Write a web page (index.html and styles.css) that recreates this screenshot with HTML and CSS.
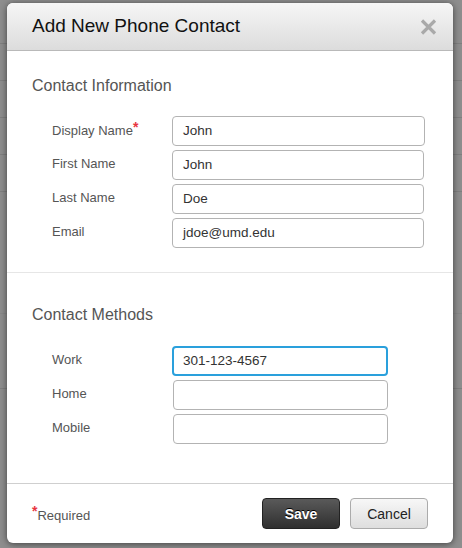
FILE: index.html
```html
<!DOCTYPE html>
<html>
<head>
<meta charset="utf-8">
<link rel="stylesheet" href="styles.css">
</head>
<body>
<div class="modal">
  <div class="modal-header">
    <h1 class="modal-title">Add New Phone Contact</h1>
    <span class="close" aria-label="Close">
      <svg width="17" height="16" viewBox="0 0 17 16"><path d="M2 1.5 L15 14.5 M15 1.5 L2 14.5" stroke="#a9a9a9" stroke-width="3.2" stroke-linecap="butt"/></svg>
    </span>
  </div>
  <div class="section section-info">
    <h2 class="section-title">Contact Information</h2>
    <div class="rows">
      <div class="row"><label class="label">Display Name<span class="req">*</span></label><div class="input wide">John</div></div>
      <div class="row"><label class="label">First Name</label><div class="input">John</div></div>
      <div class="row"><label class="label">Last Name</label><div class="input">Doe</div></div>
      <div class="row"><label class="label">Email</label><div class="input">jdoe@umd.edu</div></div>
    </div>
  </div>
  <div class="section section-methods">
    <h2 class="section-title">Contact Methods</h2>
    <div class="rows">
      <div class="row"><label class="label">Work</label><div class="input short focus">301-123-4567</div></div>
      <div class="row"><label class="label">Home</label><div class="input short"></div></div>
      <div class="row"><label class="label">Mobile</label><div class="input short"></div></div>
    </div>
  </div>
  <div class="modal-footer">
    <span class="required"><span class="req">*</span>Required</span>
    <div class="buttons">
      <button class="btn btn-save">Save</button>
      <button class="btn btn-cancel">Cancel</button>
    </div>
  </div>
</div>
</body>
</html>
```
FILE: styles.css
```css
html, body {
  margin: 0;
  padding: 0;
}
body {
  width: 462px;
  height: 548px;
  overflow: hidden;
  background-color: #8e8e8e;
  background-image:
    linear-gradient(#7f7f7f, #7f7f7f),
    linear-gradient(#7f7f7f, #7f7f7f),
    linear-gradient(#7f7f7f, #7f7f7f),
    linear-gradient(#7f7f7f, #7f7f7f),
    linear-gradient(#7f7f7f, #7f7f7f),
    linear-gradient(#888888, #888888),
    linear-gradient(#7f7f7f, #7f7f7f);
  background-repeat: no-repeat;
  background-size: 100% 1px;
  background-position: 0 43px, 0 80px, 0 117px, 0 154px, 0 191px, 0 313px, 0 388px;
  font-family: "Liberation Sans", Arial, sans-serif;
  padding: 3px 9px 0 7px;
  box-sizing: border-box;
}
.modal {
  width: 446px;
  height: 540px;
  background: #fff;
  border-radius: 6px;
  box-shadow: 0 1px 7px rgba(0, 0, 0, 0.55);
  display: flex;
  flex-direction: column;
  overflow: hidden;
}
.modal-header {
  height: 47px;
  flex: none;
  border-bottom: 1px solid #b9b9b9;
  background: linear-gradient(#f6f6f6, #dcdcdc);
  display: flex;
  align-items: center;
  justify-content: space-between;
  padding: 0 16px 0 25px;
}
.modal-title {
  margin: 0;
  font-size: 19px;
  font-weight: normal;
  color: #111;
  padding-bottom: 1px;
}
.close {
  display: flex;
  width: 17px;
  height: 16px;
  margin-top: 1px;
}
.section {
  padding: 0 28px 0 25px;
}
.section-info {
  padding-top: 25px;
  padding-bottom: 24px;
  border-bottom: 1px solid #e6e6e6;
}
.section-methods {
  padding-top: 32px;
  flex: 1;
  border-bottom: 1px solid #cfcfcf;
}
.section-title {
  margin: 0;
  font-size: 16px;
  line-height: 20px;
  font-weight: normal;
  color: #555;
}
.section-info .section-title {
  margin-bottom: 20px;
}
.section-methods .section-title {
  margin-bottom: 21px;
}
.rows {
  display: flex;
  flex-direction: column;
  gap: 4px;
  padding-left: 20px;
}
.row {
  display: flex;
  align-items: flex-start;
}
.label {
  width: 120px;
  flex: none;
  font-size: 13px;
  line-height: 16px;
  padding-top: 6px;
  color: #555;
}
.req {
  color: #e8353f;
  font-size: 14px;
  font-weight: bold;
  position: relative;
  top: -3px;
}
.input {
  box-sizing: border-box;
  width: 252px;
  height: 30px;
  border: 1px solid #b3b3b3;
  border-radius: 4px;
  font-size: 13.5px;
  line-height: 28px;
  padding-left: 10px;
  color: #333;
  background: #fff;
}
.input.wide {
  width: 253px;
}
.input.short {
  width: 215px;
  margin-left: 1px;
}
.input.focus {
  border: 2px solid #2aa0dc;
  line-height: 26px;
  padding-left: 9px;
  margin-left: 0;
  width: 216px;
}
.modal-footer {
  height: 59px;
  flex: none;
  display: flex;
  align-items: center;
  justify-content: space-between;
  padding: 0 25px 0 25px;
}
.required {
  font-size: 13px;
  color: #555;
  padding-top: 2px;
}
.required .req {
  top: -4px;
  font-size: 14px;
}
.buttons {
  display: flex;
  gap: 10px;
}
.btn {
  width: 78px;
  height: 31px;
  border-radius: 4px;
  font-family: "Liberation Sans", Arial, sans-serif;
  font-size: 14px;
  cursor: pointer;
  padding: 0;
}
.btn-save {
  background: linear-gradient(#5a5a5a, #2f2f2f);
  border: 1px solid #222;
  color: #fff;
  font-weight: bold;
  text-shadow: 0 -1px 0 #000;
}
.btn-cancel {
  background: linear-gradient(#f7f7f7, #dedede);
  border: 1px solid #ababab;
  color: #222;
}
```
